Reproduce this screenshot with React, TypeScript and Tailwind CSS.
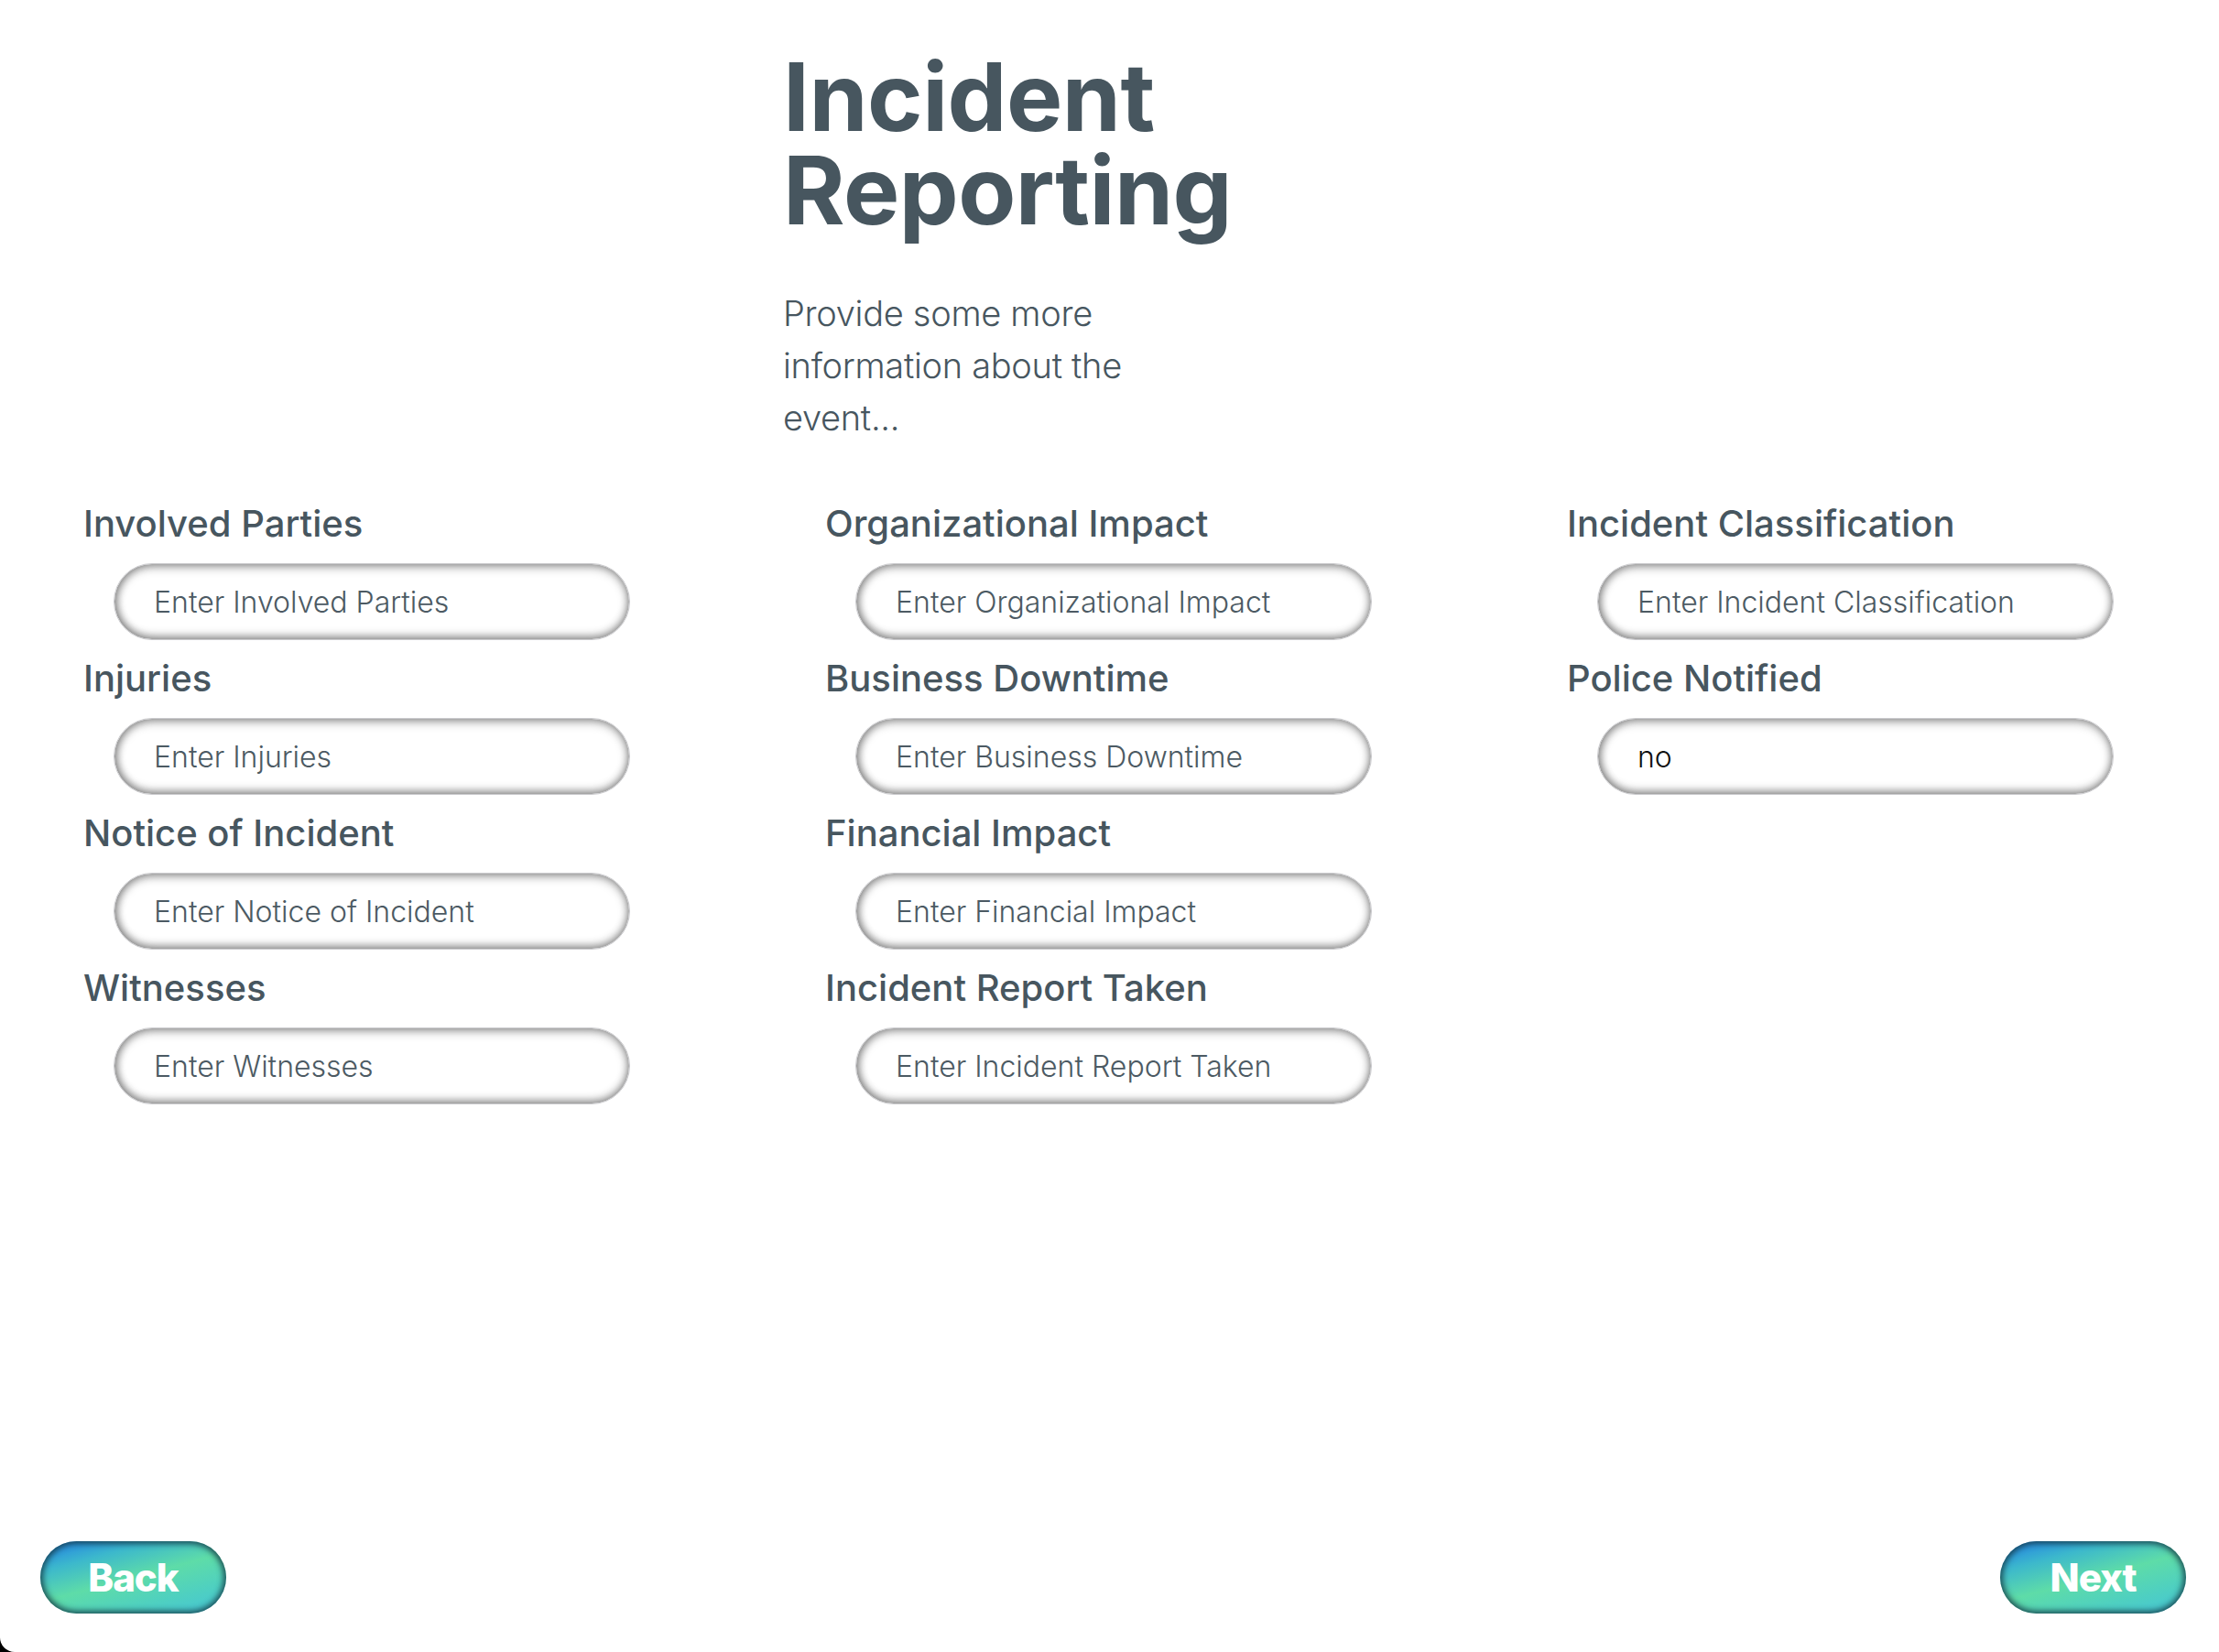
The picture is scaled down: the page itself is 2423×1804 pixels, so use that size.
const fields: { label: string; placeholder: string; value?: string }[][] = [
  [
    { label: "Involved Parties", placeholder: "Enter Involved Parties" },
    { label: "Injuries", placeholder: "Enter Injuries" },
    { label: "Notice of Incident", placeholder: "Enter Notice of Incident" },
    { label: "Witnesses", placeholder: "Enter Witnesses" },
  ],
  [
    { label: "Organizational Impact", placeholder: "Enter Organizational Impact" },
    { label: "Business Downtime", placeholder: "Enter Business Downtime" },
    { label: "Financial Impact", placeholder: "Enter Financial Impact" },
    { label: "Incident Report Taken", placeholder: "Enter Incident Report Taken" },
  ],
  [
    { label: "Incident Classification", placeholder: "Enter Incident Classification" },
    { label: "Police Notified", placeholder: "Enter Police Notified", value: "no" },
  ],
];

function Field({ label, placeholder, value }: { label: string; placeholder: string; value?: string }) {
  return (
    <div className="flex flex-col pb-[12px]">
      <label className="text-[40px] leading-[60px] font-medium text-[#47565f]">{label}</label>
      <input
        className="mt-[13px] ml-[33px] w-[564px] h-[84px] rounded-full bg-white pl-[43px] pr-6 text-[32px] font-light text-[#111] placeholder:text-[#4c5a63] outline-none border border-[#cacacd] shadow-[inset_0_3px_11px_rgba(0,0,0,0.36),inset_0_-4px_10px_rgba(0,0,0,0.3),inset_4px_0_8px_rgba(0,0,0,0.14)]"
        placeholder={placeholder}
        defaultValue={value}
      />
    </div>
  );
}

function GradientButton({ children }: { children: string }) {
  return (
    <button className="w-[203px] h-[79px] rounded-full text-white text-[42px] font-extrabold tracking-tight bg-[linear-gradient(165deg,#1f7ae8_0%,#3cb8cc_25%,#5edca8_50%,#4fd0c0_75%,#45c4d8_100%)] shadow-[inset_0_0_6px_3px_rgba(22,62,72,0.85)]">
      {children}
    </button>
  );
}

export default function App() {
  return (
    <div className="bg-black min-h-screen" style={{ fontFamily: "Inter, 'Noto Sans', sans-serif" }}>
      <div className="bg-white min-h-screen flex flex-col rounded-bl-[16px]">
        {/* Header */}
        <div className="w-[713px] mx-auto pt-[55px]">
          <h1 className="text-[103px] leading-[102px] font-bold text-[#47565f] tracking-[-0.5px]">
            Incident Reporting
          </h1>
          <p className="mt-[55px] max-w-[460px] text-[38px] leading-[57px] font-light tracking-[-0.3px] text-[#47565f]">
            Provide some more information about the event...
          </p>
        </div>

        {/* Form */}
        <div className="grid grid-cols-[810px_810px_1fr] pl-[91px] mt-[57px]">
          {fields.map((col, i) => (
            <div key={i} className="flex flex-col">
              {col.map((f) => (
                <Field key={f.label} {...f} />
              ))}
            </div>
          ))}
        </div>

        {/* Footer */}
        <div className="mt-auto flex justify-between pl-[44px] pr-[36px] pb-[42px]">
          <GradientButton>Back</GradientButton>
          <GradientButton>Next</GradientButton>
        </div>
      </div>
    </div>
  );
}
